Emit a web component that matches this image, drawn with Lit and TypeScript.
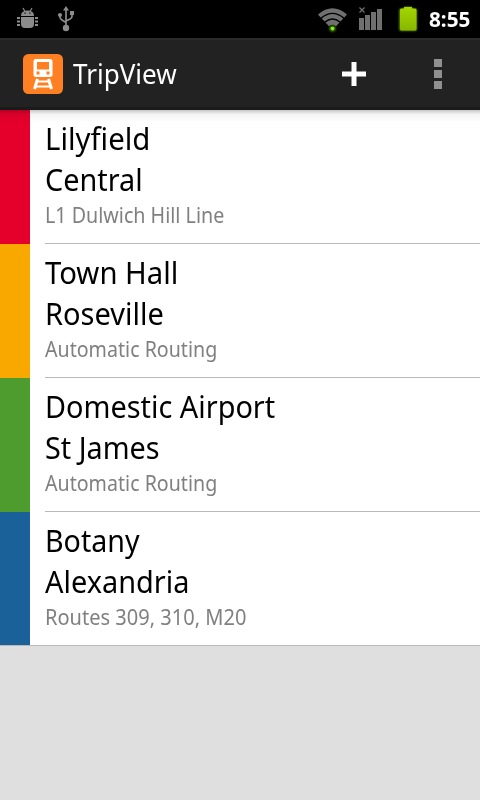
import { LitElement, html, css } from "lit";
import { customElement } from "lit/decorators.js";
import { styleMap } from "lit/directives/style-map.js";

/** A line of text and the horizontal condensing applied to it. */
type Line = [text: string, scale: number];

interface Trip {
  color: string;
  from: Line;
  to: Line;
  note: Line;
}

const trips: Trip[] = [
  { color: "#e4002b", from: ["Lilyfield", 0.947], to: ["Central", 0.93], note: ["L1 Dulwich Hill Line", 0.895] },
  { color: "#f9a800", from: ["Town Hall", 0.945], to: ["Roseville", 0.936], note: ["Automatic Routing", 0.892] },
  { color: "#4f9c2e", from: ["Domestic Airport", 0.931], to: ["St James", 0.928], note: ["Automatic Routing", 0.892] },
  { color: "#1a6199", from: ["Botany", 0.923], to: ["Alexandria", 0.933], note: ["Routes 309, 310, M20", 0.911] },
];

const condensed = ([text, scale]: Line) =>
  html`<span style=${styleMap({ transform: `scaleX(${scale})` })}>${text}</span>`;

@customElement("app-root")
export class AppRoot extends LitElement {
  static styles = css`
    :host {
      display: flex;
      flex-direction: column;
      width: 480px;
      height: 800px;
      overflow: hidden;
      background: #dfdfdf;
      font-family: "Noto Sans", "Open Sans", sans-serif;
      font-variant-ligatures: none;
    }
    svg { display: block; flex: none; }
    .status {
      height: 38px;
      background: #000;
      display: flex;
      flex: none;
    }
    .clock {
      width: 51px;
      margin-left: 1px;
      font-size: 21px;
      line-height: 38px;
      font-weight: 700;
      color: #fff;
      white-space: nowrap;
    }
    .clock span, .title span, .place span, .note span {
      display: inline-block;
      transform-origin: 0 50%;
    }
    .bar {
      height: 72px;
      box-sizing: border-box;
      flex: none;
      display: flex;
      align-items: center;
      background: #222;
      border-top: 2px solid #2b2b2b;
      border-bottom: 3px solid #1a1a1a;
      padding-left: 23px;
    }
    .title {
      margin-left: 10px;
      flex: 1;
      color: #fff;
      font-size: 27px;
      line-height: 40px;
      white-space: nowrap;
    }
    .list { background: #fff; flex: none; position: relative; }
    .list::before {
      content: "";
      position: absolute;
      inset: 0 0 auto 0;
      height: 12px;
      background: linear-gradient(rgba(0,0,0,.22), rgba(0,0,0,.05) 35%, rgba(0,0,0,0));
    }
    .row { height: 134px; display: flex; }
    .stripe { width: 30px; flex: none; }
    .body {
      flex: 1;
      margin-left: 15px;
      box-sizing: border-box;
      padding-top: 8px;
      border-bottom: 1px solid #bababa;
      white-space: nowrap;
    }
    .row:last-child { box-sizing: border-box; border-bottom: 1px solid #bababa; }
    .row:last-child .body { border-bottom: 0; }
    .place { font-size: 31px; line-height: 41px; color: #000; }
    .note { font-size: 22px; line-height: 28px; color: #808080; }
  `;

  private statusIcons() {
    return html`
      <svg width="428" height="38" viewBox="0 0 428 38">
        <defs>
          <linearGradient id="bat" x2="0" y2="1"><stop stop-color="#a4d500" /><stop offset="1" stop-color="#86b800" /></linearGradient>
          <filter id="glow" x="-50%" y="-50%" width="200%" height="200%"><feGaussianBlur stdDeviation="1.3" /></filter>
        </defs>
        <g fill="#8c8c8c">
          <path d="M21 16Q21 10.500 27.500 10.500Q34 10.500 34 16Z" />
          <path d="M23 8l2 3.500M32 8l-2 3.500" stroke="#8c8c8c" stroke-width="1.200" />
          <path d="M21 17H34V24Q34 28 30 28H25Q21 28 21 24Z" />
          <path d="M17 17h3v2h-3zM17 20.500h3v2h-3zM17 24h3v2h-3zM35 17h3v2h-3zM35 20.500h3v2h-3zM35 24h3v2h-3z" />
          <path d="M24.500 12.500h1.200v1.200h-1.200zM29.300 12.500h1.200v1.200h-1.200z" fill="#000" />
          <path d="M63 10.500L66 6L69 10.500Z" />
          <circle cx="66" cy="28" r="3.200" /><circle cx="60" cy="15" r="2.100" /><path d="M70 11h4v4h-4z" />
          <path d="M66 9V28M60 15V17Q60 19 62 20L66 22.500M72 14V16.500Q72 18 70 19L66 21" fill="none" stroke="#8c8c8c" stroke-width="1.700" />
        </g>
        <g fill="#707070">
          <path d="M318 14.500Q332.500 2 347 14.500L344.300 17.600Q332.500 8 320.700 17.600Z" />
          <path d="M321.700 18.600Q332.500 9.600 343.300 18.600L340.500 21.600Q332.500 15 324.500 21.600Z" />
          <path d="M325.500 22.600Q332.500 16.800 339.500 22.600L336 26.200Q332.500 23.400 329 26.200Z" />
          <path d="M359.500 7.500l5 5M364.500 7.500l-5 5" stroke="#707070" stroke-width="1.300" />
          <path d="M359 18h5v12h-5zM365 15h5v15h-5zM371 12h5v18h-5zM377 9h5v21h-5z" />
        </g>
        <circle cx="332.500" cy="28.500" r="3" fill="#4fa000" filter="url(#glow)" />
        <circle cx="332.500" cy="28.500" r="1.800" fill="#83ef22" />
        <path d="M399.500 9h4.500v-2h8v2h4.500v21.500h-17z" fill="#79b000" filter="url(#glow)" />
        <path d="M400 10q0-1.500 1.500-1.500H404V7H412V8.500H415q1.500 0 1.500 1.500V29q0 1.500-1.500 1.500H401.500Q400 30.500 400 29Z" fill="url(#bat)" />
      </svg>`;
  }

  render() {
    return html`
      <div class="status">
        ${this.statusIcons()}
        <div class="clock">${condensed(["8:55", 0.985])}</div>
      </div>
      <div class="bar">
        <svg width="40" height="40" viewBox="0 0 40 40">
          <rect width="40" height="40" rx="5.500" fill="#ff8022" />
          <path fill="#fff" fill-rule="evenodd" d="M13 5H27Q29.500 5 29.500 7.500V20.500Q29.500 23 27 23H13Q10.500 23 10.500 20.500V7.500Q10.500 5 13 5ZM14 8V15.500H26V8ZM13.500 17.500V20.500H16.500V17.500ZM23.500 17.500V20.500H26.500V17.500Z" />
          <path d="M14.500 25L11.500 35M25.500 25L28.500 35" stroke="#fff" stroke-width="3" />
          <path d="M13.500 27.500H26.500M12.500 32.500H27.500" stroke="#fff" stroke-width="2.200" />
        </svg>
        <div class="title">${condensed(["TripView", 0.965])}</div>
        <svg width="138" height="40" viewBox="342 54 138 40">
          <path d="M342 71.500h9.500V62h5v9.500H366v5h-9.500V86h-5v-9.500H342z" fill="#fff" />
          <path d="M434 59h8v8h-8zM434 70h8v8h-8zM434 81h8v8h-8z" fill="#909090" />
        </svg>
      </div>
      <div class="list">
        ${trips.map((t) => html`
          <div class="row">
            <div class="stripe" style=${styleMap({ background: t.color })}></div>
            <div class="body">
              <div class="place">${condensed(t.from)}</div>
              <div class="place">${condensed(t.to)}</div>
              <div class="note">${condensed(t.note)}</div>
            </div>
          </div>`)}
      </div>
    `;
  }
}
